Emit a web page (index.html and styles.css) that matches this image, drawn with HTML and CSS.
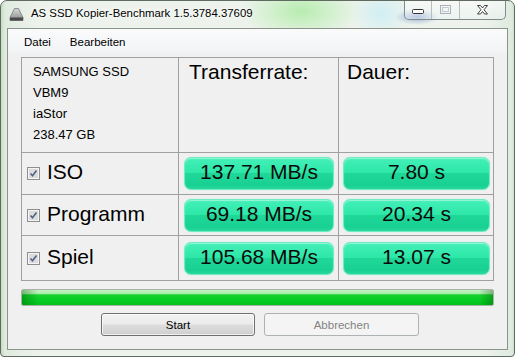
FILE: index.html
```html
<!DOCTYPE html>
<html>
<head>
<meta charset="utf-8">
<link rel="stylesheet" href="styles.css">
</head>
<body>
<div class="window">
  <div class="titlebar">
    <svg class="app-icon" width="15" height="13" viewBox="0 0 15 13">
      <defs>
        <linearGradient id="ig" x1="0" y1="0" x2="0" y2="1">
          <stop offset="0" stop-color="#d8d8d8"/>
          <stop offset="1" stop-color="#8a8a8a"/>
        </linearGradient>
      </defs>
      <path d="M5.5 0.5 H9.5 L14 9.5 V12.5 H1 V9.5 Z" fill="url(#ig)" stroke="#7a7a7a" stroke-width="0.8"/>
      <rect x="1" y="9.5" width="13" height="3" fill="#4a4a4a"/>
    </svg>
    <span class="title">AS SSD Kopier-Benchmark 1.5.3784.37609</span>
    <div class="caption">
      <div class="cbtn cmin">
        <svg width="13" height="6" viewBox="0 0 13 6"><rect x="0.5" y="0.5" width="11" height="4" rx="1" fill="#fff" stroke="#333"/></svg>
      </div>
      <div class="cbtn cmax">
        <svg width="12" height="10" viewBox="0 0 12 10"><rect x="0.5" y="0.5" width="10" height="8" fill="none" stroke="#a9b0bb"/><rect x="2.5" y="2.5" width="6" height="4" fill="none" stroke="#c4cad2"/></svg>
      </div>
      <div class="cbtn cclose">
        <svg width="12" height="10" viewBox="0 0 12 10"><path d="M0.5 0.5 H3.5 L5.5 3 L7.5 0.5 H10.5 L7 4.75 L10.5 9 H7.5 L5.5 6.5 L3.5 9 H0.5 L4 4.75 Z" fill="#fff" stroke="#404040" stroke-width="1" stroke-linejoin="round"/></svg>
      </div>
    </div>
  </div>
  <div class="client">
    <div class="menubar">
      <span class="menu-item">Datei</span>
      <span class="menu-item">Bearbeiten</span>
    </div>
    <div class="content">
      <div class="grid">
        <div class="cell info">SAMSUNG SSD<br>VBM9<br>iaStor<br>238.47 GB</div>
        <div class="cell head head2">Transferrate:</div>
        <div class="cell head head3">Dauer:</div>

        <div class="cell label"><span class="chk"><svg width="13" height="13" viewBox="0 0 13 13"><rect x="0.5" y="0.5" width="12" height="12" fill="#f4f4f4" stroke="#8e8f8f"/><rect x="2" y="2" width="9" height="9" fill="#dcdcdc"/><path d="M3.5 6.5 L5.5 8.8 L9.5 3.6" fill="none" stroke="#4f6289" stroke-width="1.6"/></svg></span>ISO</div>
        <div class="cell val2"><div class="pill">137.71 MB/s</div></div>
        <div class="cell val3"><div class="pill">7.80 s</div></div>

        <div class="cell label"><span class="chk"><svg width="13" height="13" viewBox="0 0 13 13"><rect x="0.5" y="0.5" width="12" height="12" fill="#f4f4f4" stroke="#8e8f8f"/><rect x="2" y="2" width="9" height="9" fill="#dcdcdc"/><path d="M3.5 6.5 L5.5 8.8 L9.5 3.6" fill="none" stroke="#4f6289" stroke-width="1.6"/></svg></span>Programm</div>
        <div class="cell val2"><div class="pill">69.18 MB/s</div></div>
        <div class="cell val3"><div class="pill">20.34 s</div></div>

        <div class="cell label"><span class="chk"><svg width="13" height="13" viewBox="0 0 13 13"><rect x="0.5" y="0.5" width="12" height="12" fill="#f4f4f4" stroke="#8e8f8f"/><rect x="2" y="2" width="9" height="9" fill="#dcdcdc"/><path d="M3.5 6.5 L5.5 8.8 L9.5 3.6" fill="none" stroke="#4f6289" stroke-width="1.6"/></svg></span>Spiel</div>
        <div class="cell val2"><div class="pill">105.68 MB/s</div></div>
        <div class="cell val3"><div class="pill">13.07 s</div></div>
      </div>
      <div class="progress"><div class="progress-fill"></div></div>
      <div class="buttons">
        <div class="btn btn-start">Start</div>
        <div class="btn btn-disabled">Abbrechen</div>
      </div>
    </div>
  </div>
</div>
</body>
</html>
```

FILE: styles.css
```css
html, body {
  margin: 0;
  padding: 0;
  background: #ffffff;
}

body {
  width: 515px;
  height: 357px;
  overflow: hidden;
  font-family: "Liberation Sans", Arial, sans-serif;
}

.window {
  box-sizing: border-box;
  width: 515px;
  height: 357px;
  border: 1px solid #5f6b60;
  border-radius: 7px 7px 4px 4px;
  display: flex;
  flex-direction: column;
  background:
    radial-gradient(ellipse 22px 8px at 416px 16px, rgba(90, 120, 200, 0.55), rgba(90, 120, 200, 0) 100%),
    radial-gradient(ellipse 60px 30px at 300px 10px, rgba(170, 235, 160, 0.8), rgba(170, 235, 160, 0) 100%),
    radial-gradient(ellipse 30px 26px at 380px 12px, rgba(205, 238, 245, 0.9), rgba(205, 238, 245, 0) 100%),
    linear-gradient(to right, #c6dec2 0px, #e0ebdf 4px, #edf3ec 40px, #edf3ec 480px, #e0ebe0 510px, #c6dec2 515px);
  overflow: hidden;
}

.titlebar {
  height: 27px;
  display: flex;
  align-items: flex-start;
  flex: none;
}

.app-icon {
  margin: 7px 0 0 8px;
  flex: none;
}

.title {
  margin: 4px 0 0 7px;
  font-size: 11.4px;
  line-height: 16px;
  color: #000;
  text-shadow: 0 0 6px #ffffff, 0 0 3px #ffffff;
  white-space: nowrap;
}

.caption {
  margin: -1px 8px 0 auto;
  display: flex;
  height: 19px;
  border: 1px solid #7f8a8a;
  border-top: none;
  border-radius: 0 0 5px 5px;
  background: linear-gradient(to bottom, rgba(255,255,255,0.55), rgba(235,242,245,0.35));
  box-shadow: inset 0 0 1px rgba(255,255,255,0.9);
  flex: none;
}

.cbtn {
  display: flex;
  align-items: center;
  justify-content: center;
  height: 19px;
}

.cmin {
  width: 26px;
  border-right: 1px solid #b5bdbf;
}

.cmin svg {
  margin-top: 4px;
}

.cmax {
  width: 27px;
  border-right: 1px solid #b5bdbf;
}

.cmax svg {
  margin-top: 1px;
}

.cclose {
  width: 45px;
}

.cclose svg {
  margin-top: 1px;
}

.client {
  box-sizing: border-box;
  margin: 0 6px 6px 6px;
  flex: 1;
  border: 1px solid #8a948a;
  background: #f0f0f0;
  display: flex;
  flex-direction: column;
}

.menubar {
  height: 24px;
  display: flex;
  align-items: center;
  background: linear-gradient(to bottom, #fbfbfc, #f1f3f5);
  flex: none;
}

.menu-item {
  font-size: 11.5px;
  color: #000;
  margin-left: 16px;
  margin-top: 1px;
}

.menu-item + .menu-item {
  margin-left: 19px;
}

.content {
  padding: 4px 13px 0 13px;
  display: flex;
  flex-direction: column;
}

.grid {
  display: grid;
  grid-template-columns: 156px 159px 154px;
  grid-template-rows: 94px 41px 40px 44px;
  gap: 1px;
  background: #a0a0a0;
  border: 1px solid #a0a0a0;
  width: 471px;
}

.cell {
  background: #f0f0f0;
}

.info {
  box-sizing: border-box;
  padding: 3px 0 0 11px;
  font-size: 13px;
  line-height: 21px;
  color: #000;
}

.head {
  box-sizing: border-box;
  padding-top: 2px;
  font-size: 21px;
  line-height: 24px;
  color: #000;
}

.head2 {
  padding-left: 10px;
}

.head3 {
  padding-left: 8px;
}

.label {
  box-sizing: border-box;
  display: flex;
  align-items: center;
  font-size: 21px;
  color: #000;
  padding-bottom: 3px;
}

.chk {
  display: flex;
  margin: 3px 7px 0 5px;
}

.val2,
.val3 {
  display: flex;
  align-items: center;
}

.val2 {
  padding: 0 4px 0 5px;
}

.val3 {
  padding: 0 3px 0 4px;
}

.pill {
  box-sizing: border-box;
  flex: 1;
  height: 33px;
  padding-bottom: 3px;
  border-radius: 7px;
  border: 1px solid #6fecc4;
  background: linear-gradient(to bottom, #44f0b8 0%, #2de7a8 47%, #1fd898 50%, #19d093 88%, #2ad89e 100%);
  box-shadow: inset 0 1px 1px rgba(255,255,255,0.45), 0 0 1px rgba(80, 230, 170, 0.6);
  display: flex;
  align-items: center;
  justify-content: center;
  font-size: 21px;
  color: #0a0a0a;
}

.progress {
  box-sizing: border-box;
  margin-top: 8px;
  width: 473px;
  height: 17px;
  border: 1px solid #a9b2a9;
  border-radius: 2px;
  background: #e6e6e6;
  overflow: hidden;
}

.progress-fill {
  height: 100%;
  background:
    linear-gradient(to right, rgba(0, 70, 0, 0.35) 0px, rgba(0, 70, 0, 0) 16px, rgba(0, 70, 0, 0) calc(100% - 14px), rgba(0, 70, 0, 0.35) 100%),
    linear-gradient(to bottom, #c4f3c4 0%, #a8eca8 25%, #16d22f 32%, #06cc22 70%, #03c21c 100%);
}

.buttons {
  display: flex;
  gap: 9px;
  padding-left: 80px;
  margin-top: 7px;
}

.btn {
  box-sizing: border-box;
  height: 23px;
  border-radius: 3px;
  display: flex;
  align-items: center;
  justify-content: center;
  font-size: 11.5px;
}

.btn-start {
  width: 154px;
  border: 1px solid #707070;
  background: linear-gradient(to bottom, #f2f2f2 0%, #ebebeb 48%, #dddddd 52%, #cfcfcf 100%);
  box-shadow: inset 0 0 0 1px rgba(255,255,255,0.7);
  color: #000;
}

.btn-disabled {
  width: 155px;
  border: 1px solid #adb2b5;
  background: #f4f4f4;
  color: #838383;
}
```
